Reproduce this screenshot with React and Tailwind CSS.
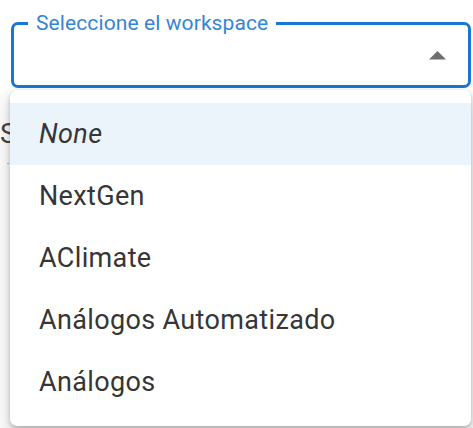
import React from "react";

const items = ["None", "NextGen", "AClimate", "Análogos Automatizado", "Análogos"];

export default function App() {
  return (
    <div
      className="relative w-[473px] h-[428px] overflow-hidden bg-white"
      style={{ fontFamily: "Roboto, 'Liberation Sans', sans-serif" }}
    >
      <div className="pt-[22px] pl-[11px] pr-[2px]">
        <div className="relative h-[66px] rounded-[7px] border-[3px] border-[#1976d2] flex items-center justify-end pr-[22px]">
          <span className="absolute left-[14px] -top-[14px] bg-white px-[8px] text-[21px] leading-[24px] tracking-[0.1px] text-[#3585d6]">
            Seleccione el workspace
          </span>
          <svg width="17" height="9" viewBox="0 0 17 9" className="mt-[1px]">
            <path d="M0 8.5 L8.5 0 L17 8.5 Z" fill="#6f6f6f" />
          </svg>
        </div>
        <div className="mt-[31px] -ml-[11px] text-[28px] leading-[30px] text-[#444]">S</div>
        <div className="mt-[14px] -ml-[4px] w-[8px] border-t border-dotted border-[#bbb]"></div>
      </div>

      <div className="absolute left-[10px] top-[90px] w-[461px] rounded-[7px] bg-white py-[13px] shadow-[0_8px_16px_2px_rgba(0,0,0,0.18),0_2px_4px_rgba(0,0,0,0.2)]">
        {items.map((it, i) => (
          <div
            key={it}
            className={
              "h-[62px] flex items-center pl-[29px] text-[27px] tracking-[0.35px] text-[#363636] " +
              (i === 0 ? "bg-[#ebf3fb] italic" : "")
            }
          >
            {it}
          </div>
        ))}
      </div>
    </div>
  );
}
